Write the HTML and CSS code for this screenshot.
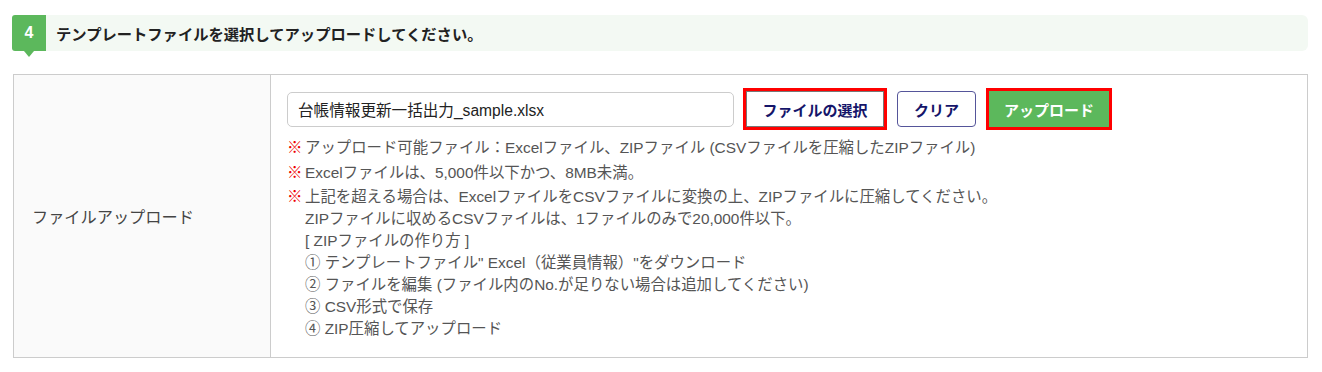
FILE: index.html
```html
<!DOCTYPE html>
<html lang="ja">
<head>
<meta charset="utf-8">
<title>ファイルアップロード</title>
<link rel="stylesheet" href="styles.css">
</head>
<body>
<div class="step">
  <div class="step-num">4</div>
  <div class="step-title">テンプレートファイルを選択してアップロードしてください。</div>
</div>
<div class="form-table">
  <div class="form-label">ファイルアップロード</div>
  <div class="form-content">
    <div class="file-row">
      <div class="file-input">台帳情報更新一括出力_sample.xlsx</div>
      <button class="btn btn-select">ファイルの選択</button>
      <button class="btn btn-clear">クリア</button>
      <button class="btn btn-upload">アップロード</button>
    </div>
    <ul class="notes">
      <li><span class="mark">※</span><span class="note-text">アップロード可能ファイル：Excelファイル、ZIPファイル (CSVファイルを圧縮したZIPファイル)</span></li>
      <li><span class="mark">※</span><span class="note-text">Excelファイルは、5,000件以下かつ、8MB未満。</span></li>
      <li><span class="mark">※</span><span class="note-text">上記を超える場合は、ExcelファイルをCSVファイルに変換の上、ZIPファイルに圧縮してください。<br>ZIPファイルに収めるCSVファイルは、1ファイルのみで20,000件以下。<br>[ ZIPファイルの作り方 ]<br>① テンプレートファイル" Excel（従業員情報）"をダウンロード<br>② ファイルを編集 (ファイル内のNo.が足りない場合は追加してください)<br>③ CSV形式で保存<br>④ ZIP圧縮してアップロード</span></li>
    </ul>
  </div>
</div>
</body>
</html>
```
FILE: styles.css
```css
* { box-sizing: border-box; }
body {
  margin: 0;
  background: #fff;
  font-family: "Liberation Sans", "Noto Sans CJK JP", sans-serif;
  color: #444;
}
.step {
  display: flex;
  height: 36px;
  margin: 15px 14px 0 12px;
}
.step-num {
  position: relative;
  width: 34px;
  background: #5cb85c;
  color: #fff;
  font-weight: bold;
  font-size: 16px;
  border-radius: 3px 0 0 3px;
  display: flex;
  align-items: center;
  justify-content: center;
}
.step-num::after {
  content: "";
  position: absolute;
  left: 12px;
  bottom: -6px;
  border-left: 5px solid transparent;
  border-right: 5px solid transparent;
  border-top: 6px solid #5cb85c;
}
.step-title {
  flex: 1;
  background: #f3f9f3;
  border-radius: 0 6px 6px 0;
  padding-left: 10px;
  display: flex;
  align-items: center;
  font-family: "Noto Sans CJK JP", sans-serif;
  font-weight: bold;
  font-size: 15.3px;
  color: #222;
}
.form-table {
  display: grid;
  grid-template-columns: 257px 1fr;
  margin: 23px 14px 0 13px;
  border: 1px solid #ccc;
}
.form-label {
  background: #fafafa;
  border-right: 1px solid #ccc;
  padding-left: 18px;
  display: flex;
  align-items: center;
  font-family: "Noto Sans CJK JP", sans-serif;
  font-size: 16.2px;
  color: #444;
}
.form-content {
  padding: 16px 16px 17px 16px;
}
.file-row {
  display: flex;
  align-items: center;
  height: 36px;
}
.file-input {
  width: 447px;
  height: 35px;
  border: 1px solid #ccc;
  border-radius: 5px;
  padding-left: 10px;
  display: flex;
  align-items: center;
  font-size: 15.6px;
  color: #222;
}
.btn {
  height: 36px;
  border-radius: 4px;
  font-family: "Noto Sans CJK JP", sans-serif;
  font-weight: bold;
  font-size: 15px;
  color: #15156a;
  background: #fff;
  padding: 0;
  cursor: pointer;
}
.btn-select {
  width: 138px;
  margin-left: 12px;
  border: 1px solid #777;
  border-radius: 0;
  outline: 3px solid #f00;
}
.btn-clear {
  width: 79px;
  margin-left: 13px;
  border: 1px solid #55559a;
}
.btn-upload {
  width: 120px;
  margin-left: 13px;
  border: none;
  border-radius: 0;
  background: #5cb85c;
  color: #fff;
  outline: 3px solid #f00;
}
.notes {
  list-style: none;
  margin: 10px 0 0;
  padding: 0;
  font-size: 15.4px;
  line-height: 22px;
  color: #555;
}
.notes li {
  display: flex;
}
.notes li + li {
  margin-top: 2.5px;
}
.mark {
  flex: none;
  width: 18px;
  color: #e00;
  font-weight: bold;
}
```
